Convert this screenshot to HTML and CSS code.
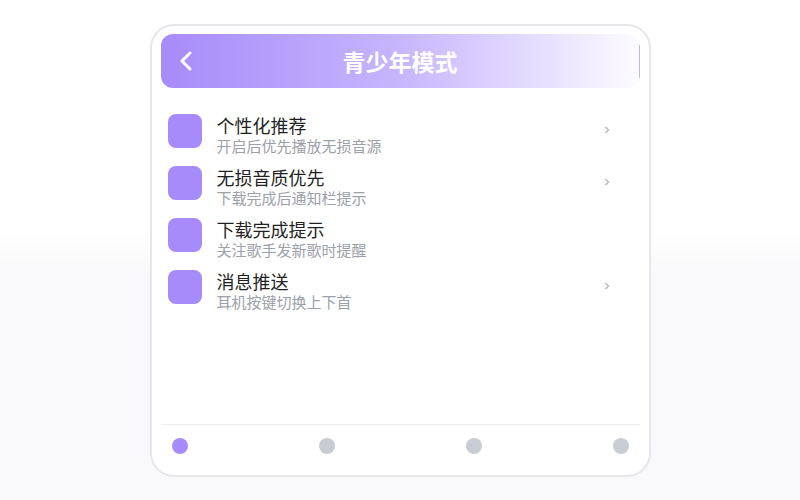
FILE: index.html
```html
<!DOCTYPE html>
<html lang="zh-CN">
<head>
    <meta charset="UTF-8">
    <meta name="viewport" content="width=device-width, initial-scale=1.0">
    <title>青少年模式</title>
    <link rel="stylesheet" href="styles.css">
</head>
<body>
    <div class="phone">
        <div class="header">
            <svg class="back" width="14" height="20" viewBox="0 0 14 20">
                <polyline points="11,2 3,10 11,18" fill="none" stroke="#fff" stroke-width="3" stroke-linecap="round" stroke-linejoin="round"/>
            </svg>
            <h1 class="title">青少年模式</h1>
        </div>

        <ul class="settings">
            <li class="item">
                <div class="icon"></div>
                <div class="text">
                    <div class="name">个性化推荐</div>
                    <div class="desc">开启后优先播放无损音源</div>
                </div>
                <svg class="arrow" width="6" height="8" viewBox="0 0 6 8"><polyline points="1.5,1 4.5,4 1.5,7" fill="none" stroke="#b4b8c0" stroke-width="1.4"/></svg>
            </li>
            <li class="item">
                <div class="icon"></div>
                <div class="text">
                    <div class="name">无损音质优先</div>
                    <div class="desc">下载完成后通知栏提示</div>
                </div>
                <svg class="arrow" width="6" height="8" viewBox="0 0 6 8"><polyline points="1.5,1 4.5,4 1.5,7" fill="none" stroke="#b4b8c0" stroke-width="1.4"/></svg>
            </li>
            <li class="item">
                <div class="icon"></div>
                <div class="text">
                    <div class="name">下载完成提示</div>
                    <div class="desc">关注歌手发新歌时提醒</div>
                </div>
            </li>
            <li class="item">
                <div class="icon"></div>
                <div class="text">
                    <div class="name">消息推送</div>
                    <div class="desc">耳机按键切换上下首</div>
                </div>
                <svg class="arrow" width="6" height="8" viewBox="0 0 6 8"><polyline points="1.5,1 4.5,4 1.5,7" fill="none" stroke="#b4b8c0" stroke-width="1.4"/></svg>
            </li>
        </ul>

        <div class="tabbar">
            <span class="dot active"></span>
            <span class="dot"></span>
            <span class="dot"></span>
            <span class="dot"></span>
        </div>
    </div>
</body>
</html>
```

FILE: styles.css
```css
body {
    font-family: "Noto Sans CJK SC", "Noto Sans", sans-serif;
    margin: 0;
    height: 500px;
    background: linear-gradient(#fff 0%, #fff 46%, #f9f9fb 54%, #f9f9fb 100%);
    display: flex;
    justify-content: center;
    align-items: center;
}
.phone {
    box-sizing: border-box;
    width: 501px;
    height: 453px;
    margin-top: 1px;
    border: 2px solid #e6e6eb;
    border-radius: 24px;
    background-color: #fff;
    padding: 8px 9px;
    display: flex;
    flex-direction: column;
}
.header {
    position: relative;
    height: 54px;
    border-radius: 12px;
    background: linear-gradient(90deg, #a78bfa 0%, #c6b6fd 50%, #fdfcff 100%);
    display: flex;
    justify-content: center;
    align-items: center;
}
.header::after {
    content: "";
    position: absolute;
    right: 0;
    top: 11px;
    width: 1px;
    height: 33px;
    background-color: #c4b2fb;
}
.back {
    position: absolute;
    left: 18px;
    top: 17px;
}
.title {
    margin: 0;
    color: #fff;
    font-size: 23px;
    font-weight: bold;
    line-height: 30px;
}
.settings {
    list-style: none;
    margin: 0;
    padding: 26px 0 0 7px;
    flex: 1;
}
.item {
    height: 52px;
    display: flex;
    align-items: flex-start;
}
.icon {
    width: 34px;
    height: 34px;
    border-radius: 8px;
    background-color: #a78bfa;
    flex-shrink: 0;
}
.text {
    margin: 0 0 0 15px;
    flex: 1;
}
.name {
    font-size: 18px;
    line-height: 23px;
    color: #1f1f24;
}
.desc {
    font-size: 15px;
    line-height: 18px;
    color: #9ca0a8;
}
.arrow {
    margin: 12px 30px 0 0;
}
.tabbar {
    border-top: 1px solid #eeeef1;
    padding: 13px 11px 13px;
    display: flex;
    justify-content: space-between;
}
.dot {
    width: 16px;
    height: 16px;
    border-radius: 50%;
    background-color: #c8ccd3;
}
.dot.active {
    background-color: #a78bfa;
}
```
